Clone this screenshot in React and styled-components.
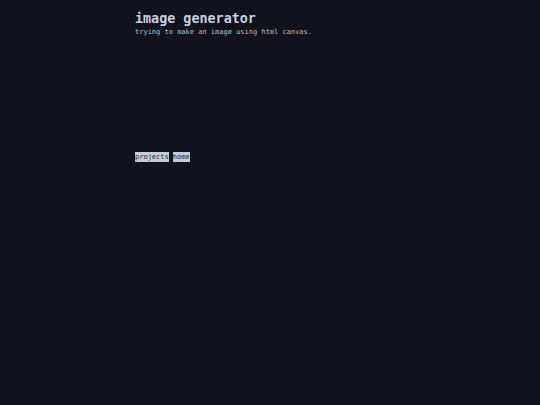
import React from "react";
import styled, { createGlobalStyle } from "styled-components";

const Global = createGlobalStyle`
  html, body { margin: 0; padding: 0; background: #11121b; }
  body { font-family: "DejaVu Sans Mono", "Liberation Mono", monospace; color: #c9cfe0; }
`;

const Page = styled.main`
  width: 270px;
  margin: 0 auto;
  padding-top: 10px;
  display: flex;
  flex-direction: column;
`;

const Title = styled.h1`
  margin: 0;
  font-size: 13.4px;
  font-weight: bold;
  line-height: 17px;
  color: #c9cfe0;
`;

const Subtitle = styled.p`
  margin: 0;
  font-size: 7px;
  line-height: 10px;
  color: #b9bfd0;
`;

const Canvas = styled.div`
  height: 115px;
`;

const Nav = styled.nav`
  display: flex;
  gap: 4px;
`;

const NavLink = styled.a`
  font-size: 7px;
  line-height: 9px;
  padding: 0.5px 0;
  background: #c6cbdc;
  color: #1a1c28;
  text-decoration: none;
`;

export default function App() {
  return (
    <>
      <Global />
      <Page>
        <Title>image generator</Title>
        <Subtitle>trying to make an image using html canvas.</Subtitle>
        <Canvas />
        <Nav>
          <NavLink href="#">projects</NavLink>
          <NavLink href="#">home</NavLink>
        </Nav>
      </Page>
    </>
  );
}
